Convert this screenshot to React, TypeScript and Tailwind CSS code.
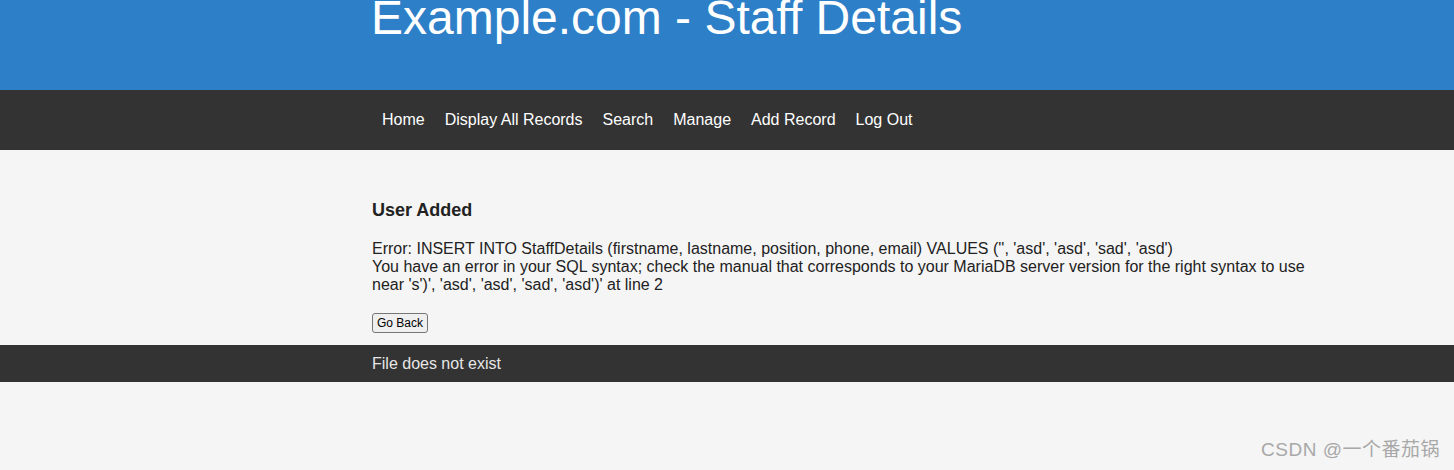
export default function App() {
  const links = ["Home", "Display All Records", "Search", "Manage", "Add Record", "Log Out"];

  return (
    <div className="relative min-h-[470px] bg-[#f5f5f5] font-['Liberation_Sans',Arial,sans-serif] text-[#222]">
      <header className="h-[90px] overflow-hidden bg-[#2d7fc8]">
        <h1 className="ml-[371px] mt-[-10px] text-[48px] leading-[56px] font-normal text-white">
          Example.com - Staff Details
        </h1>
      </header>

      <nav className="flex h-[60px] items-center bg-[#333333] pl-[372px]">
        {links.map((link) => (
          <a key={link} href="#" className="px-[10px] text-[16px] text-white">
            {link}
          </a>
        ))}
      </nav>

      <main className="pl-[372px] pt-[50px] pb-[11px]">
        <h2 className="text-[18px] leading-[20px] font-bold text-[#222]">User Added</h2>
        <p className="mt-[20px] w-[940px] text-[16px] leading-[18px] text-[#222]">
          Error: INSERT INTO StaffDetails (firstname, lastname, position, phone, email) VALUES ('', 'asd', 'asd', 'sad', 'asd')
          <br />
          You have an error in your SQL syntax; check the manual that corresponds to your MariaDB server version for the right syntax to use near 's')', 'asd', 'asd', 'sad', 'asd')' at line 2
        </p>
        <button
          type="button"
          className="mt-[19px] h-[20px] rounded-[3px] border border-[#767676] bg-[#efefef] px-[4px] text-[12px] leading-[16px] text-black"
        >
          Go Back
        </button>
      </main>

      <footer className="flex h-[37px] items-center bg-[#333333] pl-[372px]">
        <span className="text-[16px] text-[#e6e6e6]">File does not exist</span>
      </footer>

      <div className="absolute bottom-[6px] right-[14px] text-[19px] tracking-[0.5px] text-[#a8a8a8] font-['Liberation_Sans','Noto_Sans_CJK_SC',sans-serif]">
        CSDN @一个番茄锅
      </div>
    </div>
  );
}
